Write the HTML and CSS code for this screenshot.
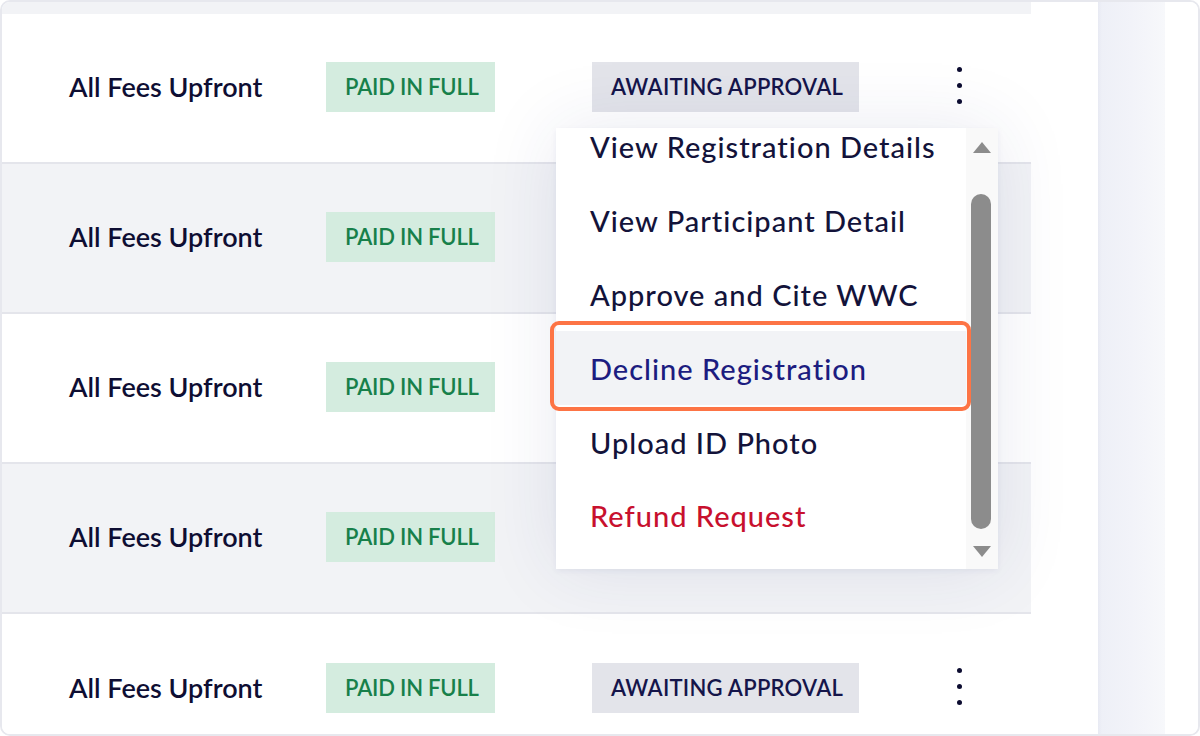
FILE: index.html
```html
<!DOCTYPE html>
<html lang="en">
<head>
<meta charset="utf-8">
<title>Registrations</title>
<link rel="stylesheet" href="styles.css">
</head>
<body>
<div class="frame">
  <div class="table">
    <div class="row row-alt row-partial"></div>
    <div class="row">
      <div class="cell plan">All Fees Upfront</div>
      <div class="cell"><span class="badge badge-paid">PAID IN FULL</span></div>
      <div class="cell"><span class="badge badge-await">AWAITING APPROVAL</span></div>
      <div class="cell"><span class="kebab"><i></i><i></i><i></i></span></div>
    </div>
    <div class="row row-alt">
      <div class="cell plan">All Fees Upfront</div>
      <div class="cell"><span class="badge badge-paid">PAID IN FULL</span></div>
      <div class="cell"></div>
      <div class="cell"></div>
    </div>
    <div class="row">
      <div class="cell plan">All Fees Upfront</div>
      <div class="cell"><span class="badge badge-paid">PAID IN FULL</span></div>
      <div class="cell"></div>
      <div class="cell"></div>
    </div>
    <div class="row row-alt">
      <div class="cell plan">All Fees Upfront</div>
      <div class="cell"><span class="badge badge-paid">PAID IN FULL</span></div>
      <div class="cell"></div>
      <div class="cell"></div>
    </div>
    <div class="row row-last">
      <div class="cell plan">All Fees Upfront</div>
      <div class="cell"><span class="badge badge-paid">PAID IN FULL</span></div>
      <div class="cell"><span class="badge badge-await">AWAITING APPROVAL</span></div>
      <div class="cell"><span class="kebab"><i></i><i></i><i></i></span></div>
    </div>
  </div>
  <div class="gap"></div>
  <div class="strip"></div>
  <div class="edge"></div>

  <div class="menu">
    <ul class="menu-list">
      <li class="menu-item">View Registration Details</li>
      <li class="menu-item">View Participant Detail</li>
      <li class="menu-item">Approve and Cite WWC</li>
      <li class="menu-item menu-item-active">Decline Registration</li>
      <li class="menu-item">Upload ID Photo</li>
      <li class="menu-item menu-item-danger">Refund Request</li>
    </ul>
    <div class="scrollbar">
      <span class="arrow arrow-up"></span>
      <span class="thumb"></span>
      <span class="arrow arrow-down"></span>
    </div>
  </div>
</div>
</body>
</html>
```

FILE: styles.css
```css
* { box-sizing: border-box; }

html, body {
  margin: 0;
  padding: 0;
  background: #ffffff;
}

body {
  font-family: Lato, "Open Sans", "Liberation Sans", sans-serif;
  color: #0e0e33;
}

.frame {
  position: relative;
  width: 1200px;
  height: 736px;
  border: 2px solid #e7e8ee;
  border-radius: 10px;
  display: flex;
  overflow: hidden;
  background: #ffffff;
}

.table {
  width: 1029px;
  flex: none;
  display: flex;
  flex-direction: column;
}

.row {
  flex: none;
  height: 150px;
  display: grid;
  grid-template-columns: 257px 266px 366px 1fr;
  align-items: center;
  padding-left: 67px;
  padding-bottom: 3px;
  background: #ffffff;
  border-bottom: 2px solid #e4e5eb;
}

.row-alt { background: #f2f3f6; }

.row-partial {
  height: 12px;
  padding-bottom: 0;
  border-bottom: none;
}

.row-last { border-bottom: none; }

.cell {
  display: flex;
  align-items: center;
}

.plan {
  font-size: 27px;
  font-weight: 600;
  color: #0e0e33;
  letter-spacing: 0;
}

.badge {
  display: inline-flex;
  align-items: center;
  height: 50px;
  font-size: 22px;
  font-weight: 600;
}

.badge-paid {
  background: #d4ecdf;
  color: #17804a;
  padding: 0 16px 0 19px;
  letter-spacing: -0.2px;
}

.badge-await {
  background: #e3e4ea;
  color: #15154a;
  padding: 0 16px 0 19px;
  letter-spacing: 0.25px;
}

.kebab {
  display: flex;
  flex-direction: column;
  gap: 11px;
  margin-left: -1px;
  margin-top: -3px;
}

.kebab i {
  display: block;
  width: 5px;
  height: 5px;
  border-radius: 50%;
  background: #0c0c30;
}

.gap {
  width: 67px;
  flex: none;
  background: #ffffff;
}

.strip {
  width: 67px;
  flex: none;
  background: linear-gradient(to right, #e8eaf3 0, #eef0f7 4px, #f2f3f9 50%, #f7f8fb 100%);
}

.edge {
  flex: 1;
  background: #ffffff;
}

/* Dropdown menu (overlay) */
.menu {
  position: absolute;
  left: 554px;
  top: 126px;
  width: 442px;
  height: 441px;
  background: #ffffff;
  display: flex;
  box-shadow: 0 0 70px rgba(40, 50, 120, 0.10), 0 2px 6px rgba(40, 50, 120, 0.06);
}

.menu-list {
  list-style: none;
  margin: -18px 0 0 0;
  padding: 0;
  flex: 1;
}

.menu-item {
  position: relative;
  height: 73.8px;
  display: flex;
  align-items: center;
  padding-left: 34px;
  font-size: 29px;
  font-weight: 500;
  color: #13133a;
  letter-spacing: 1px;
}

.menu-item-active {
  background: #f2f3f6;
  color: #1c1c80;
}

.menu-item-active::after {
  content: "";
  position: absolute;
  left: -6px;
  right: -5px;
  top: -10px;
  bottom: -6px;
  border: 4px solid #fd7445;
  border-radius: 9px;
}

.menu-item-danger { color: #c8102e; }

.scrollbar {
  width: 32px;
  flex: none;
  background: #f9f9f9;
  display: flex;
  flex-direction: column;
  align-items: center;
  padding-top: 14px;
}

.arrow {
  width: 0;
  height: 0;
  border-left: 9px solid transparent;
  border-right: 9px solid transparent;
}

.arrow-up { border-bottom: 11px solid #8c8c8c; }

.arrow-down {
  border-top: 11px solid #8c8c8c;
  margin-top: 17px;
}

.thumb {
  width: 20px;
  height: 335px;
  margin-top: 41px;
  border-radius: 10px;
  background: #8c8c8c;
  margin-left: -2px;
}
```
